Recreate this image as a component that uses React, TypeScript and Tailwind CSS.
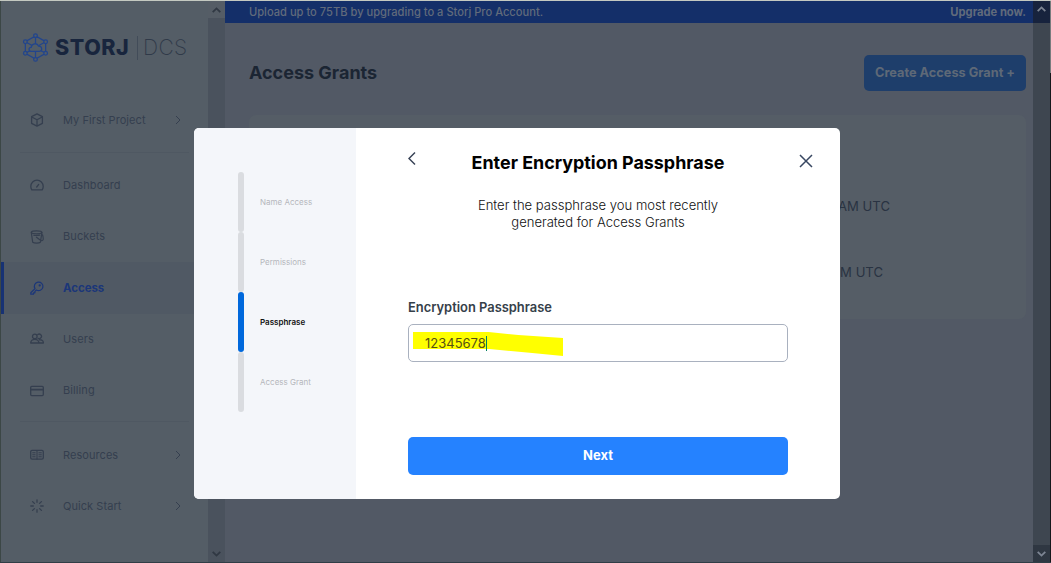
import type { ReactNode } from "react";

function Icon({ children, size = 14 }: { children: ReactNode; size?: number }) {
  return (
    <svg width={size} height={size} viewBox="0 0 14 14" fill="none" stroke="currentColor" strokeWidth="1.3" strokeLinecap="round" strokeLinejoin="round">
      {children}
    </svg>
  );
}

const icons = {
  box: (
    <Icon>
      <path d="M7 .9 12.4 3.7v6.6L7 13.1 1.6 10.3V3.7zM1.8 4 7 6.8 12.2 4M7 6.8V13" />
    </Icon>
  ),
  dashboard: (
    <Icon>
      <path d="M1.8 11.800a6.1 6.1 0 0 1-1-3.3C.8 4.800 3.6 2.200 7 2.200s6.200 2.600 6.200 6.300c0 1.200-.4 2.400-1 3.300zM6.700 9 8.700 6.400" />
    </Icon>
  ),
  bucket: (
    <Icon>
      <ellipse cx="6.600" cy="2.300" rx="5.300" ry="1.500" />
      <path d="M1.300 2.500 2.700 12.200c1.600 1.100 6.100 1.100 7.700 0l1.500-9.500M3.800 5.300c2 .3 4 .2 6-.1M6.500 7.200l4.300 3.200c2.600.8 3-.9 1.800-5.600" strokeWidth="1.200" />
    </Icon>
  ),
  key: (
    <Icon>
      <path d="M5 7.600.8 11.700v1.500h2.700v-1.400h1.400v-1.400l1.500-1.400a4.300 4.300 0 1 0-1.400-1.400z" strokeWidth="1.200" />
      <circle cx="9.700" cy="4.400" r=".5" />
    </Icon>
  ),
  users: (
    <Icon>
      <circle cx="4.800" cy="4.400" r="2.300" />
      <path d="M7.800 2.500a2.300 2.300 0 1 1 .3 3.900M.7 11c0-4.800 8.200-4.800 8.200 0zM9.500 7.800c2.400-.3 3.900 1 3.900 3.200H9.500" />
    </Icon>
  ),
  card: (
    <Icon>
      <rect x=".7" y="2.400" width="12.600" height="9.200" rx="1" />
      <path d="M.8 5.700h12.400" strokeWidth="1.700" />
    </Icon>
  ),
  book: (
    <Icon>
      <rect x=".7" y="2.400" width="12.600" height="8.800" rx="1.400" />
      <path d="M7 2.500v8.600M2.700 4.800h2.400M2.700 6.800h2.400M2.700 8.800h2.400M8.900 4.800h2.400M8.900 6.800h2.400M8.900 8.800h2.400" strokeWidth="1.100" />
    </Icon>
  ),
  spark: (
    <Icon>
      <path d="M7 .8v2.500M7 10.700v2.500M.8 7h2.500M10.700 7h2.500M2.600 2.600l1.800 1.800M9.600 9.600l1.800 1.800M2.600 11.400l1.800-1.800M9.600 4.400l1.800-1.800" />
    </Icon>
  ),
};

function NavItem({ icon, label, arrow, active }: { icon: ReactNode; label: string; arrow?: boolean; active?: boolean }) {
  return (
    <div
      className={
        active
          ? "flex h-[51.300px] shrink-0 items-center border-l-[3px] border-[#173274] bg-[#505964] pl-[26px] pr-[27px] text-[#1b3679]"
          : "flex h-[51.300px] shrink-0 items-center pl-[29px] pr-[27px] text-[#353f4f]"
      }
    >
      <span className="flex w-[33px]">{icon}</span>
      <span
        className={
          active
            ? "flex-1 pt-px text-[11.400px] font-bold"
            : arrow
              ? "flex-1 pt-px text-[11px] font-normal tracking-[0.060px]"
              : "flex-1 pb-px text-[11px] font-normal tracking-[0.100px]"
        }
      >
        {label}
      </span>
      {arrow && (
        <svg width="6" height="10" viewBox="0 0 6 10" fill="none" stroke="currentColor" strokeWidth="1">
          <path d="m1 1 4 4-4 4" />
        </svg>
      )}
    </div>
  );
}

function Chevron({ up }: { up?: boolean }) {
  return (
    <svg width="9" height="6" viewBox="0 0 9 6" fill="none" stroke="currentColor" strokeWidth="1.800">
      <path d={up ? "M.7 5.200 4.500 1.400 8.300 5.200" : "M.7.8 4.500 4.600 8.300.8"} />
    </svg>
  );
}

function Logo() {
  return (
    <div className="flex items-center">
      <svg width="27" height="29" viewBox="0 0 27 30" fill="none" stroke="#22458d" strokeWidth="1.300">
        <path d="M13.500 3 24 9v12l-10.500 6L3 21V9zM13.500 3v8M3 9l7 4M24 9l-7 4M3 21l5.500-3M24 21l-5.500-3M13.500 19v8" />
        <path d="M9 18.900c-3-.3-2.900-4 0-4.100.5-4.200 6.300-5 7.600-1.300 3.800-.5 4.700 5.400.8 5.400z" fill="#525d67" />
        <g fill="#525d67">
          <circle cx="13.500" cy="2.700" r="1.900" />
          <circle cx="24" cy="9" r="1.900" />
          <circle cx="24" cy="21" r="1.900" />
          <circle cx="13.500" cy="27.300" r="1.900" />
          <circle cx="3" cy="21" r="1.900" />
          <circle cx="3" cy="9" r="1.900" />
        </g>
      </svg>
      <span className="ml-[6px] w-[82px] text-[21.500px] leading-none font-extrabold tracking-[0.550px] text-[#18253d]">STORJ</span>
      <span className="h-[24px] w-px shrink-0 bg-[#424c59]" />
      <span className="ml-[5px] text-[21px] leading-none font-extralight tracking-[0.400px] text-[#303a49]">DCS</span>
    </div>
  );
}

function Sidebar() {
  return (
    <nav className="flex w-[207px] shrink-0 flex-col bg-[#545d66]">
      <div className="flex h-[93px] shrink-0 items-center pl-[21px]">
        <Logo />
      </div>
      <NavItem icon={icons.box} label="My First Project" arrow />
      <div className="mx-[19px] mt-[7px] mb-[6.500px] h-px shrink-0 bg-[#4f5862]" />
      <NavItem icon={icons.dashboard} label="Dashboard" />
      <NavItem icon={icons.bucket} label="Buckets" />
      <NavItem icon={icons.key} label="Access" active />
      <NavItem icon={icons.users} label="Users" />
      <NavItem icon={icons.card} label="Billing" />
      <div className="mx-[19px] mt-[5px] mb-[7px] h-px shrink-0 bg-[#4f5862]" />
      <NavItem icon={icons.book} label="Resources" arrow />
      <NavItem icon={icons.spark} label="Quick Start" arrow />
    </nav>
  );
}

function Content() {
  return (
    <main className="flex w-[808px] shrink-0 flex-col bg-[#525965]">
      <div className="flex h-[22px] shrink-0 items-center justify-between bg-[#142f69] pt-px pr-[7px] pl-[24px] text-[#616b7b]">
        <span className="text-[11.130px] font-medium">Upload up to 75TB by upgrading to a Storj Pro Account.</span>
        <span className="text-[11.200px] font-bold">Upgrade now.</span>
      </div>
      <div className="mt-[32px] flex h-[36px] shrink-0 items-center justify-between pr-[7px] pl-[24px]">
        <h1 className="pb-[2px] text-[18px] font-bold text-[#1b2533]">Access Grants</h1>
        <button className="h-[36px] w-[162px] rounded-[5px] bg-[#1e3e6b] text-[12.750px] font-bold text-[#5e6977]">Create Access Grant +</button>
      </div>
      <section className="mt-[24px] mr-[7px] ml-[24px] flex h-[204px] shrink-0 flex-col rounded-[7px] bg-[#555d66] pt-[59px] text-[13.100px] text-[#293342]">
        <div className="flex h-[66px] items-center justify-end pr-[136px]">06:42:18 AM UTC</div>
        <div className="flex h-[66px] items-center justify-end pr-[143px]">06:15:33 AM UTC</div>
      </section>
    </main>
  );
}

const steps = [
  { label: "Name Access", active: false },
  { label: "Permissions", active: false },
  { label: "Passphrase", active: true },
  { label: "Access Grant", active: false },
];

function Modal() {
  return (
    <div className="flex h-[371px] w-[646px] overflow-hidden rounded-[5px] bg-white">
      <aside className="w-[162px] shrink-0 bg-[#f4f6fa] pt-[44px] pl-[44px]">
        {steps.map((s) => (
          <div key={s.label} className="flex h-[60px] items-center gap-[16px]">
            <span className={s.active ? "h-full w-[6px] rounded-[3px] bg-[#0068dc]" : "h-full w-[6px] rounded-[3px] bg-[#dadce0]"} />
            <span className={s.active ? "text-[8px] font-semibold text-[#111]" : "text-[8px] text-[#b5b7bc]"}>{s.label}</span>
          </div>
        ))}
      </aside>
      <div className="flex flex-1 flex-col px-[52px]">
        <div className="relative flex h-[69px] shrink-0 items-center justify-center">
          <svg className="absolute top-[23px] left-0" width="8" height="15" viewBox="0 0 8 15" fill="none" stroke="#384356" strokeWidth="1.500">
            <path d="M7 1.500 1 7.500l6 6" />
          </svg>
          <h2 className="pt-px text-[17.900px] font-bold text-black">Enter Encryption Passphrase</h2>
          <svg className="absolute top-[26px] -right-[25px]" width="14" height="14" viewBox="0 0 14 14" fill="none" stroke="#384761" strokeWidth="1.500">
            <path d="m1 1 12 12M13 1 1 13" />
          </svg>
        </div>
        <p className="text-center text-[13.050px] leading-[17px] font-[350] text-[#111]">
          Enter the passphrase you most recently
          <br />
          generated for Access Grants
        </p>
        <label className="mt-[68px] text-[12.900px] leading-[18px] font-semibold text-[#354049]">Encryption Passphrase</label>
        <div className="relative mt-[7px] flex h-[38px] shrink-0 items-center rounded-[5px] border border-[#a9b1bf] pl-[16px]">
          <svg className="absolute top-[6px] left-[4px]" width="150" height="27" viewBox="0 0 151 27">
            <path d="M0 1h76l30 3 45 3v18l-31-3-43-4H0z" fill="#ff0" />
          </svg>
          <span className="relative pt-[2px] text-[13px] text-[#565013]">12345678</span>
          <span className="relative h-[15px] w-px bg-[#008060]" />
        </div>
        <button className="mt-[75px] h-[38px] shrink-0 rounded-[5px] bg-[#2582ff] pb-px text-[13px] font-bold text-white">Next</button>
      </div>
    </div>
  );
}

export default function App() {
  return (
    <div className="relative flex h-[563px] w-[1051px] flex-col overflow-hidden border-t border-b border-t-[#c4c9c1] border-b-[#303d46] bg-[#525965] font-['Inter',sans-serif]">
      <div className="flex min-h-0 flex-1">
        <div className="w-px shrink-0 bg-[#3c4746]" />
        <Sidebar />
        <div className="flex w-[17px] shrink-0 flex-col items-center justify-between bg-[#4a525d] text-[#303843]">
          <div className="flex h-[17px] w-full items-center justify-center bg-[#555d66]">
            <Chevron up />
          </div>
          <div className="flex h-[17px] items-center">
            <Chevron />
          </div>
        </div>
        <Content />
        <div className="flex w-[17px] shrink-0 flex-col justify-between bg-[#3e4650] text-[#7d8593]">
          <div className="flex h-[22px] items-start justify-center bg-[#17233d] pt-[5px]">
            <Chevron up />
          </div>
          <div className="flex h-[17px] items-center justify-center bg-[#2f3742]">
            <Chevron />
          </div>
        </div>
        <div className="flex w-px shrink-0 flex-col bg-[#15181c]">
          <div className="h-[72px] bg-[#777c7e]" />
        </div>
      </div>
      <div className="absolute top-[127px] left-[194px]">
        <Modal />
      </div>
    </div>
  );
}
